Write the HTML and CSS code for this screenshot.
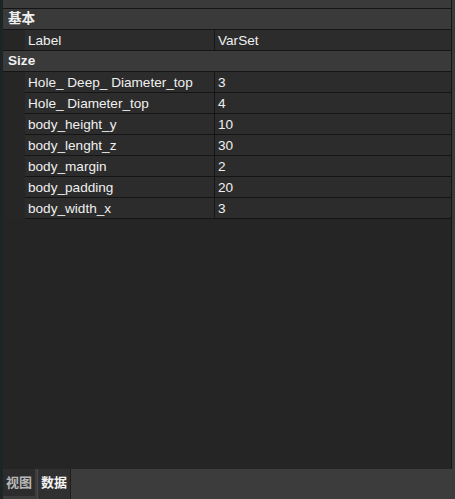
FILE: index.html
```html
<!DOCTYPE html>
<html>
<head>
<meta charset="utf-8">
<link rel="stylesheet" href="styles.css">
</head>
<body>
<div class="panel">
  <div class="main">
    <div class="grid">
      <div class="topstrip"></div>
      <div class="section">基本</div>
      <div class="row last"><div class="indent"></div><div class="cells"><div class="name">Label</div><div class="value">VarSet</div></div></div>
      <div class="section">Size</div>
      <div class="row"><div class="indent"></div><div class="cells"><div class="name">Hole_ Deep_ Diameter_top</div><div class="value">3</div></div></div>
      <div class="row"><div class="indent"></div><div class="cells"><div class="name">Hole_ Diameter_top</div><div class="value">4</div></div></div>
      <div class="row"><div class="indent"></div><div class="cells"><div class="name">body_height_y</div><div class="value">10</div></div></div>
      <div class="row"><div class="indent"></div><div class="cells"><div class="name">body_lenght_z</div><div class="value">30</div></div></div>
      <div class="row"><div class="indent"></div><div class="cells"><div class="name">body_margin</div><div class="value">2</div></div></div>
      <div class="row"><div class="indent"></div><div class="cells"><div class="name">body_padding</div><div class="value">20</div></div></div>
      <div class="row"><div class="indent"></div><div class="cells"><div class="name">body_width_x</div><div class="value">3</div></div></div>
    </div>
    <div class="scroll"></div>
  </div>
  <div class="tabbar">
    <div class="tab">视图</div>
    <div class="tab active">数据</div>
  </div>
</div>
</body>
</html>
```
FILE: styles.css
```css
html, body {
  margin: 0;
  padding: 0;
  background: #252525;
}
body {
  font-family: "Liberation Sans", "Noto Sans CJK SC", sans-serif;
  font-size: 13.6px;
  color: #f0f0f0;
}
.panel {
  height: 499px;
  display: flex;
  flex-direction: column;
  border-left: 3px solid #1c2525;
  box-sizing: border-box;
}
.main {
  flex: 1;
  display: flex;
  background: #252525;
}
.grid {
  flex: 1;
}
.scroll {
  width: 3px;
  border-left: 1px solid #141414;
  background: #3a3a3a;
}
.topstrip {
  height: 8px;
  background: #3a3a3a;
  border-bottom: 1px solid #151515;
}
.section {
  height: 20px;
  line-height: 20px;
  padding-left: 5px;
  font-weight: bold;
  background: #3a3a3a;
  border-bottom: 1px solid #151515;
}
.row {
  display: flex;
  height: 21px;
}
.indent {
  width: 22px;
  background: #262626;
}
.row.last .indent {
  border-bottom: 1px solid #151515;
  box-sizing: border-box;
}
.cells {
  flex: 1;
  display: flex;
  background: #2c2c2c;
  border-bottom: 1px solid #151515;
}
.name {
  width: 190px;
  box-sizing: border-box;
  padding-left: 3px;
  line-height: 21px;
  border-right: 1px solid #151515;
}
.value {
  flex: 1;
  padding-left: 3px;
  line-height: 21px;
}
.tabbar {
  height: 30px;
  background: #3c3c3c;
  display: flex;
  align-items: flex-start;
  gap: 2px;
}
.tab {
  height: 27px;
  line-height: 28px;
  padding: 0 3px 0 3px;
  font-weight: bold;
  font-size: 13px;
  color: #b8b8b8;
  background: #2c2c2c;
}
.tab.active {
  height: 30px;
  color: #f4f4f4;
  background: #303030;
  border-left: 1px solid #4a4a4a;
  border-right: 1px solid #1e1e1e;
  padding: 0 3px;
}
```
